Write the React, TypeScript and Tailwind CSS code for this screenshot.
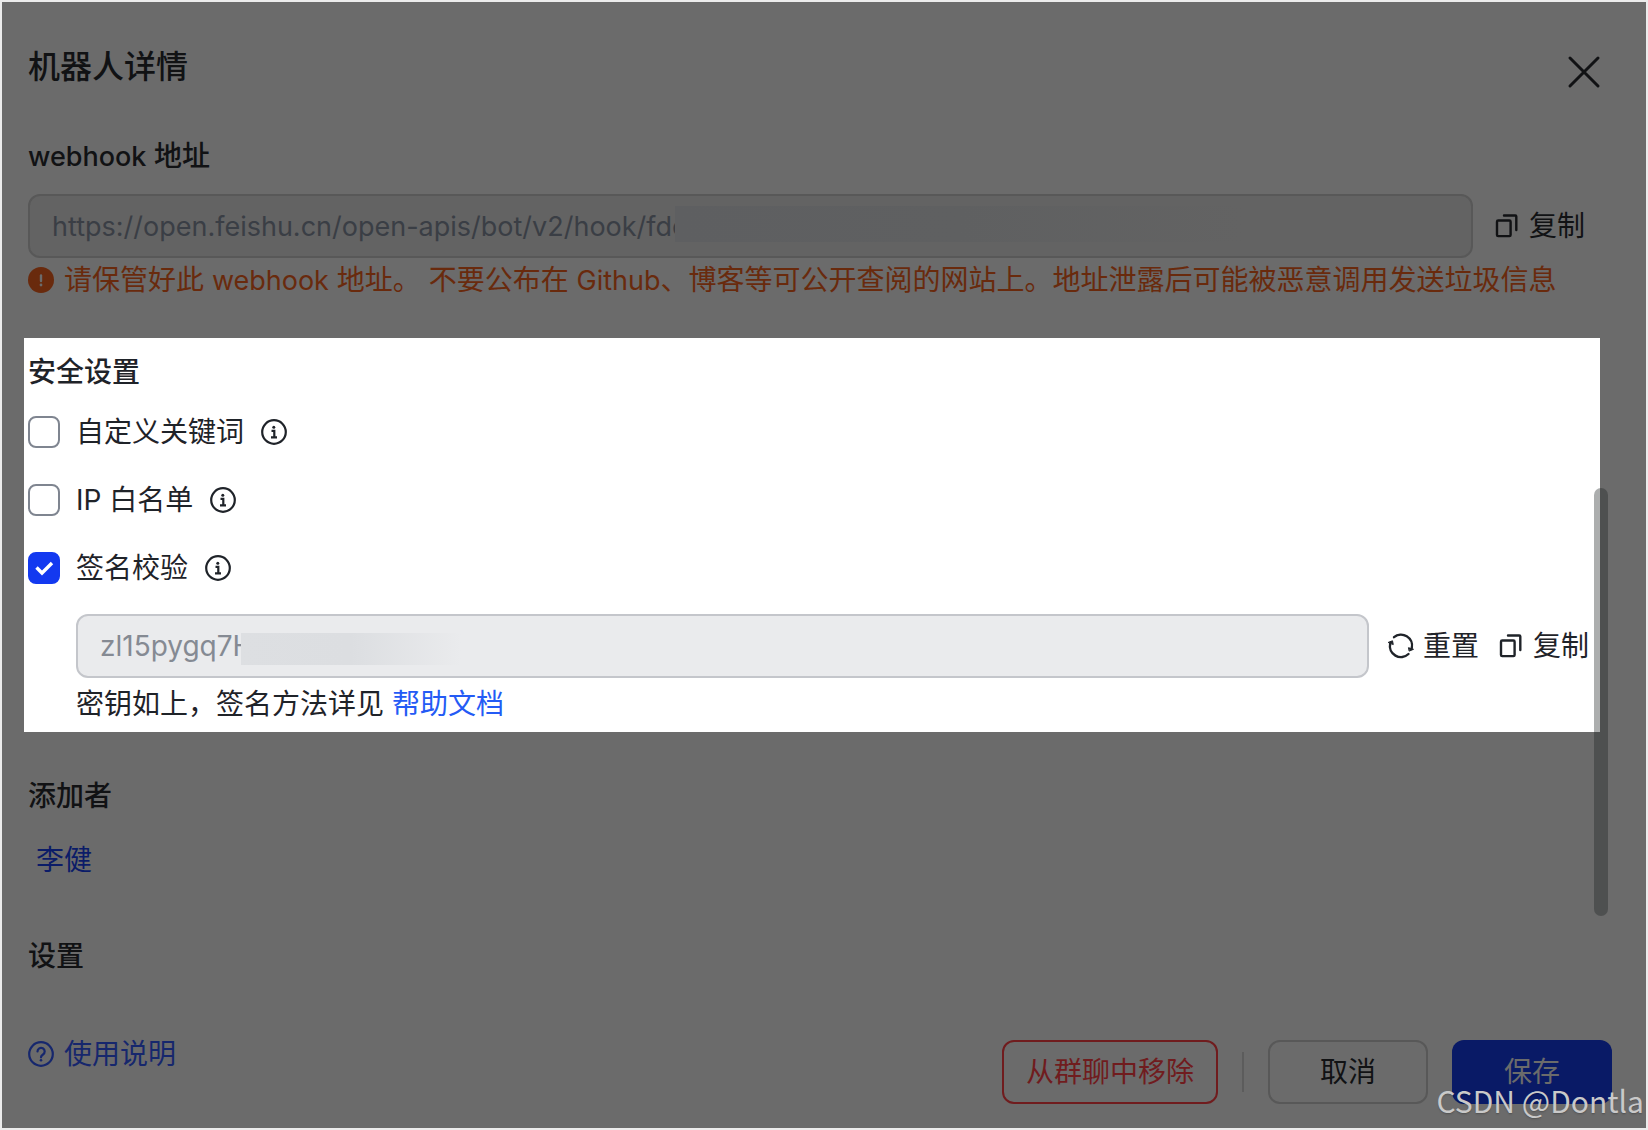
import { useState, type ReactNode } from "react";

type ButtonProps = {
  icon: ReactNode;
  label: string;
};

type CheckProps = {
  id: string;
  label: string;
  checked: boolean;
  onChange: () => void;
};

function CopyIcon() {
  return (
    <svg width="28" height="28" viewBox="0 0 28 28" fill="none" stroke="currentColor" strokeWidth="2.4" strokeLinecap="round" strokeLinejoin="round">
      <rect x="4" y="8.5" width="13.6" height="15.6" rx="1.2" />
      <path d="M11 3.500h11.300a1 1 0 0 1 1 1V18" />
    </svg>
  );
}

function ResetIcon() {
  return (
    <svg width="28" height="28" viewBox="0 0 28 28" fill="none" stroke="currentColor" strokeWidth="2.4" strokeLinecap="round" strokeLinejoin="round">
      <path d="M7 5.200A11 11 0 0 1 24.800 16" />
      <path d="M21.500 22A11 11 0 0 1 3.200 11.500" />
      <path d="M21.800 15.800L26.500 17.300L22.500 19z" fill="currentColor" strokeWidth="1" />
      <path d="M1.500 10.300L5.500 8.800L6.200 12.200z" fill="currentColor" strokeWidth="1" />
    </svg>
  );
}

function InfoIcon() {
  return (
    <svg width="26" height="26" viewBox="0 0 26 26" fill="none" stroke="currentColor" strokeWidth="2.2">
      <circle cx="13" cy="13" r="11.800" />
      <circle cx="12.800" cy="8.200" r="1.500" fill="currentColor" stroke="none" />
      <path d="M10.500 11.800h2.800v6.400M10 18.300h6" />
    </svg>
  );
}

function WarningIcon() {
  return (
    <svg width="26" height="26" viewBox="0 0 26 26">
      <circle cx="13" cy="13" r="13" fill="#692a0d" />
      <path d="M13 8.500v5.500" stroke="#6b6b6b" strokeWidth="2.400" strokeLinecap="round" />
      <circle cx="13" cy="18" r="1.400" fill="#6b6b6b" />
    </svg>
  );
}

function HelpIcon() {
  return (
    <svg width="26" height="26" viewBox="0 0 26 26" fill="none" stroke="currentColor" strokeWidth="2.200">
      <circle cx="13" cy="13" r="11.800" />
      <path d="M9.500 10.500a3.600 3.600 0 1 1 5.500 3c-1.300.9-2 1.400-2 2.800" strokeLinecap="round" />
      <circle cx="13" cy="19.200" r="1.300" fill="currentColor" stroke="none" />
    </svg>
  );
}

function IconButton({ icon, label }: ButtonProps) {
  return (
    <button type="button" className="flex shrink-0 items-center gap-2">
      {icon}
      <span>{label}</span>
    </button>
  );
}

function CheckRow({ id, label, checked, onChange }: CheckProps) {
  return (
    <div className="flex h-8 items-center">
      <span className="relative flex size-8 shrink-0">
        <input
          id={id}
          type="checkbox"
          checked={checked}
          onChange={onChange}
          className="size-8 appearance-none rounded-lg border-2 border-[#7f8590] bg-white checked:border-[#1339f0] checked:bg-[#1339f0]"
        />
        {checked && (
          <svg className="pointer-events-none absolute inset-0" viewBox="0 0 32 32" fill="none" stroke="white" strokeWidth="3.400">
            <path d="M8.500 15.500l5.500 5.500 10-10" />
          </svg>
        )}
      </span>
      <label htmlFor={id} className="ml-4">{label}</label>
      <button type="button" aria-label={`${label} info`} className="ml-[17px]">
        <InfoIcon />
      </button>
    </div>
  );
}

export default function App() {
  const [keyword, setKeyword] = useState(false);
  const [whitelist, setWhitelist] = useState(false);
  const [signature, setSignature] = useState(true);

  return (
    <div className="flex min-h-screen bg-[#ececec] p-0.5 font-[Inter,'Noto_Sans_CJK_SC',sans-serif] text-[28px] leading-10">
      <main className="relative flex flex-1 flex-col bg-[#6b6b6b] text-[#111214]">
        <header className="flex items-center justify-between pt-10 pr-[45px] pl-[26px]">
          <h1 className="text-[32px] leading-[50px] font-medium">机器人详情</h1>
          <button type="button" aria-label="关闭" className="pt-2.5">
            <svg width="34" height="34" viewBox="0 0 34 34" stroke="currentColor" strokeWidth="3" strokeLinecap="round">
              <path d="M3 3l28 28M31 3L3 31" />
            </svg>
          </button>
        </header>

        <section className="mt-11 pr-[61px] pl-[26px]">
          <h2 className="font-medium">
            <label htmlFor="webhook"><span className="text-[27px] leading-none">webhook</span> 地址</label>
          </h2>
          <div className="mt-[18px] flex items-center gap-5">
            <div className="relative flex-1">
              <input
                id="webhook"
                readOnly
                value="https://open.feishu.cn/open-apis/bot/v2/hook/fde"
                className="block h-16 w-full rounded-xl border-2 border-[#585858] bg-[#636363] px-[22px] text-[27px] text-[#3a3e45]"
              />
              <span className="absolute top-3 left-[647px] h-9 w-[568px] bg-linear-to-r from-[#5e5f61] via-[#5f6061] to-[#636363]" />
            </div>
            <IconButton icon={<CopyIcon />} label="复制" />
          </div>
          <p className="mt-0.5 flex items-center gap-2.5 whitespace-nowrap text-[#692a0d]">
            <WarningIcon />
            <span>
              请保管好此 <span className="text-[27px] leading-none">webhook</span> 地址。 不要公布在 <span className="text-[27px] leading-none">Github</span>、博客等可公开查阅的网站上。地址泄露后可能被恶意调用发送垃圾信息
            </span>
          </p>
        </section>

        <section className="mt-[38px] mr-[46px] ml-[22px] bg-white pt-3.5 pr-[11px] pb-2 pl-1 text-[#1f2329]">
          <h2 className="font-medium">安全设置</h2>
          <div className="mt-6 flex flex-col gap-9">
            <CheckRow id="keyword" label="自定义关键词" checked={keyword} onChange={() => setKeyword(!keyword)} />
            <CheckRow id="whitelist" label="IP 白名单" checked={whitelist} onChange={() => setWhitelist(!whitelist)} />
            <CheckRow id="signature" label="签名校验" checked={signature} onChange={() => setSignature(!signature)} />
          </div>
          <div className="mt-[30px] flex items-center gap-[18px] pl-12">
            <div className="relative flex-1">
              <input
                aria-label="签名校验密钥"
                readOnly
                value="zl15pygq7H"
                className="block h-16 w-full rounded-xl border-2 border-[#c4c6cb] bg-[#eaebed] px-[22px] text-[#858a93]"
              />
              <span className="absolute top-[19px] left-[165px] h-8 w-[220px] bg-linear-to-r from-[#dddfe2] via-[#dcdee1] to-[#eaebed]" />
            </div>
            <IconButton icon={<ResetIcon />} label="重置" />
            <IconButton icon={<CopyIcon />} label="复制" />
          </div>
          <p className="mt-1.5 pl-12">
            密钥如上，签名方法详见 <a href="#help" className="text-[#245bf5]">帮助文档</a>
          </p>
        </section>

        <section className="mt-11 pl-[26px]">
          <h2 className="font-medium">添加者</h2>
          <a href="#owner" className="mt-6 block pl-2 text-[#0b1c68]">李健</a>
        </section>

        <section className="mt-14 pl-[26px]">
          <h2 className="font-medium">设置</h2>
        </section>

        <footer className="mt-auto flex items-start justify-between pr-[34px] pb-6 pl-[26px]">
          <a href="#usage" className="-mt-1.5 flex items-center gap-2.5 text-[#16276d]">
            <HelpIcon />
            使用说明
          </a>
          <div className="flex items-center">
            <button type="button" className="h-16 rounded-xl border-2 border-[#701c1e] px-[22px] text-[#701c1e]">从群聊中移除</button>
            <span className="ml-6 h-10 w-0.5 bg-[#5c5c5c]" />
            <button type="button" className="ml-6 h-16 w-40 rounded-xl border-2 border-[#585858]">取消</button>
            <button type="button" className="ml-6 h-16 w-40 rounded-xl bg-[#091a66] text-[#6b6b6b]">保存</button>
          </div>
        </footer>

        <div className="absolute top-[486px] right-[38px] h-[428px] w-3.5 rounded-full bg-[#1f2323]/37" />
        <span className="absolute right-0.5 bottom-2 font-['Noto_Sans_CJK_SC',sans-serif] text-[30px] text-[#c9c9c9] text-shadow-sm">CSDN @Dontla</span>
      </main>
    </div>
  );
}
